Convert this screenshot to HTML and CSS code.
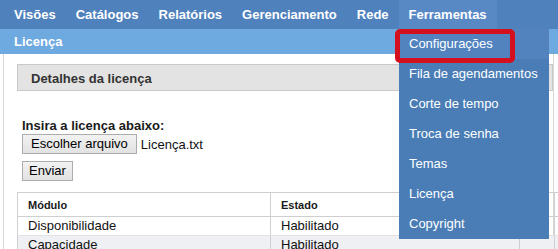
FILE: index.html
```html
<!DOCTYPE html>
<html lang="pt">
<head>
<meta charset="utf-8">
<title>Licença</title>
<link rel="stylesheet" href="styles.css">
</head>
<body>
<nav class="topnav">
  <span class="nav-item">Visões</span>
  <span class="nav-item">Catálogos</span>
  <span class="nav-item">Relatórios</span>
  <span class="nav-item">Gerenciamento</span>
  <span class="nav-item">Rede</span>
  <span class="nav-item nav-active">Ferramentas</span>
</nav>
<div class="subbar">Licença</div>
<main class="panel">
  <div class="details-box">Detalhes da licença</div>
  <div class="form">
    <div class="form-label">Insira a licença abaixo:</div>
    <div class="file-row">
      <span class="btn btn-file">Escolher arquivo</span>
      <span class="file-name">Licença.txt</span>
    </div>
    <div class="send-row"><span class="btn">Enviar</span></div>
  </div>
  <table class="modules">
    <colgroup>
      <col class="c1"><col class="c2"><col class="c3"><col class="c4">
    </colgroup>
    <thead>
      <tr><th>Módulo</th><th>Estado</th><th></th><th></th></tr>
    </thead>
    <tbody>
      <tr><td>Disponibilidade</td><td>Habilitado</td><td></td><td></td></tr>
      <tr class="alt"><td>Capacidade</td><td>Habilitado</td><td></td><td></td></tr>
    </tbody>
  </table>
</main>
<ul class="dropdown">
  <li class="dd-item dd-hover">Configurações</li>
  <li class="dd-item">Fila de agendamentos</li>
  <li class="dd-item">Corte de tempo</li>
  <li class="dd-item">Troca de senha</li>
  <li class="dd-item">Temas</li>
  <li class="dd-item">Licença</li>
  <li class="dd-item">Copyright</li>
</ul>
<div class="highlight-ring"></div>
</body>
</html>
```
FILE: styles.css
```css
html, body {
  margin: 0;
  padding: 0;
  overflow: hidden;
  background: #ffffff;
  font-family: "Liberation Sans", Arial, sans-serif;
  font-size: 13px;
  color: #111;
}

.topnav {
  display: flex;
  height: 29px;
  line-height: 29px;
  padding-left: 4px;
  background: #4f81bd;
  color: #fff;
  font-weight: bold;
  font-size: 13px;
}
.nav-item {
  padding: 0 10px;
}
.nav-active {
  background: #5889c5;
}

.subbar {
  height: 25px;
  line-height: 25px;
  padding-left: 14px;
  background: #6ea9df;
  color: #fff;
  font-weight: bold;
}

.panel {
  margin-left: 3px;
  width: 551px;
  border-left: 1px solid #d6d6d6;
  border-right: 1px solid #d6d6d6;
  padding: 10px 0 0 13px;
  box-sizing: border-box;
  height: 200px;
}

.details-box {
  height: 22px;
  line-height: 22px;
  padding: 3px 0 0 13px;
  background: #e3e3e3;
  border: 1px solid #c9c9c9;
  font-weight: bold;
  color: #333;
}

.form {
  padding-left: 5px;
  padding-top: 27px;
}
.form-label {
  line-height: 15px;
  font-weight: bold;
  color: #1a1a1a;
}
.file-row {
  display: flex;
  align-items: center;
  gap: 4px;
  margin-top: 1px;
}
.file-name {
  color: #111;
}
.send-row {
  display: flex;
  margin-top: 7px;
}
.btn {
  display: inline-block;
  height: 18px;
  line-height: 18px;
  padding: 0 6px;
  border: 1px solid #adadad;
  background: linear-gradient(#f2f2f2, #e2e2e2);
  color: #000;
}
.btn-file {
  padding: 0 8px;
}

.modules {
  margin-top: 11px;
  border-collapse: collapse;
  table-layout: fixed;
  width: 620px;
}
.c1 { width: 253px; }
.c2 { width: 249px; }
.c3 { width: 35px; }
.c4 { width: 83px; }
.modules th, .modules td {
  border: 1px solid #cfcfcf;
  padding: 0 10px;
  text-align: left;
}
.modules th {
  height: 23px;
  font-size: 11px;
  font-weight: bold;
  color: #1a1a1a;
}
.modules td {
  height: 18px;
  line-height: 18px;
  border-top-color: #e2e2e2;
  border-bottom-color: #e2e2e2;
}
.modules tr.alt td {
  background: #eef0f4;
}

.dropdown {
  position: absolute;
  left: 399px;
  top: 29px;
  width: 150px;
  margin: 0;
  padding: 0;
  list-style: none;
  background: #4a7db5;
}
.dd-item {
  height: 30px;
  line-height: 30px;
  padding-left: 10px;
  color: #fff;
}
.dd-hover {
  background: #5283bf;
}

.highlight-ring {
  position: absolute;
  left: 395px;
  top: 29px;
  width: 110px;
  height: 24px;
  border: 5px solid #d5101e;
  border-radius: 5px;
}
```
